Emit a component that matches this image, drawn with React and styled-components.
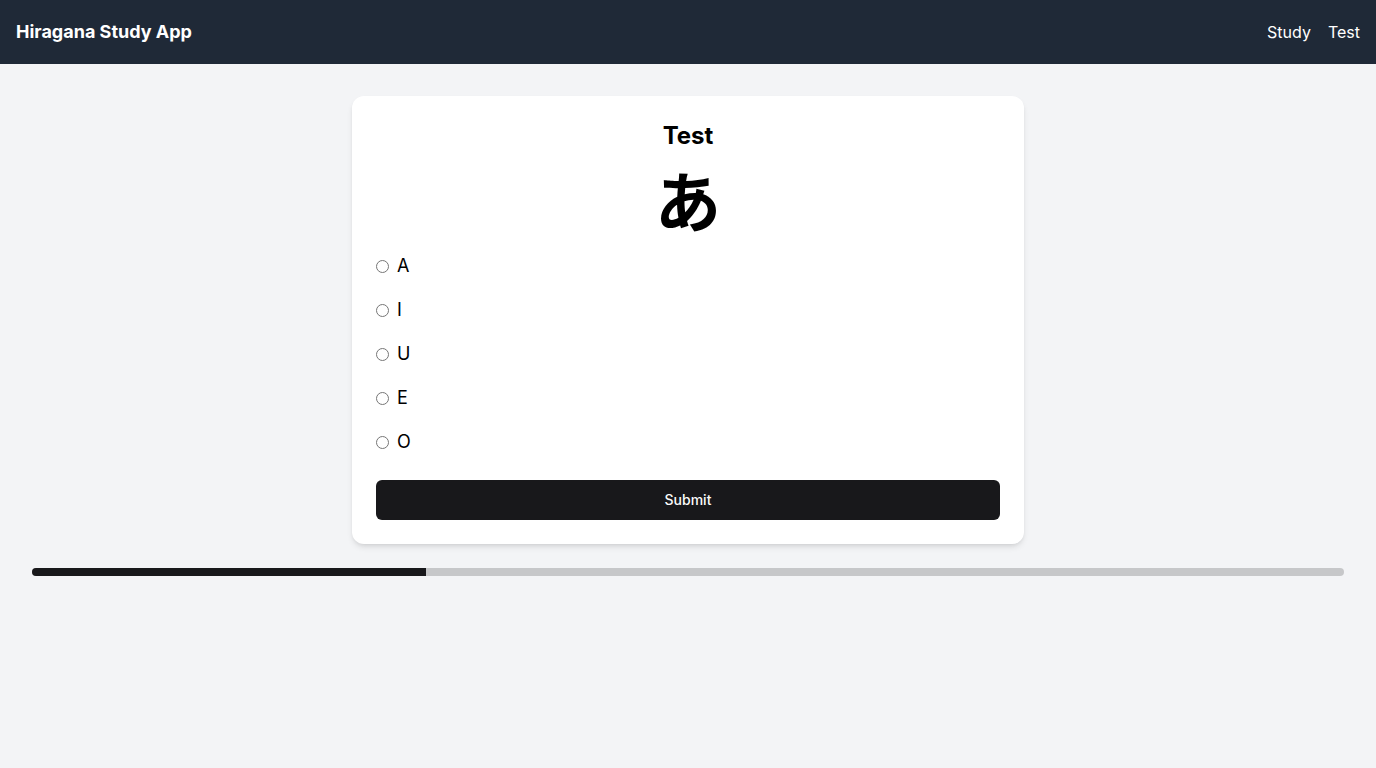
import React, { useState } from "react";
import styled, { createGlobalStyle } from "styled-components";

const Global = createGlobalStyle`
  * { box-sizing: border-box; }
  html, body { margin: 0; padding: 0; }
  body {
    background: #f3f4f6;
    font-family: Inter, "Noto Sans", "Noto Sans CJK JP", sans-serif;
    color: #000;
  }
`;

const Page = styled.div`
  min-height: 768px;
  background: #f3f4f6;
`;

const Header = styled.header`
  height: 64px;
  background: #1f2937;
  color: #fff;
  display: flex;
  align-items: center;
  justify-content: space-between;
  padding: 0 16px;
`;

const Brand = styled.h1`
  margin: 0;
  font-size: 18px;
  font-weight: 700;
  line-height: 28px;
`;

const Nav = styled.nav`
  display: flex;
  gap: 17px;
`;

const NavLink = styled.a`
  color: #fff;
  text-decoration: none;
  font-size: 16px;
  line-height: 24px;
`;

const Main = styled.main`
  padding: 32px;
  display: flex;
  flex-direction: column;
  align-items: center;
  gap: 24px;
`;

const Card = styled.section`
  width: 672px;
  background: #fff;
  border-radius: 12px;
  box-shadow: 0 4px 6px -1px rgba(0,0,0,0.1), 0 2px 4px -2px rgba(0,0,0,0.1);
  padding: 24px;
  display: flex;
  flex-direction: column;
`;

const Title = styled.h2`
  margin: 0 0 16px;
  text-align: center;
  font-size: 24px;
  line-height: 32px;
  font-weight: 700;
`;

const Kana = styled.div`
  height: 60px;
  display: flex;
  align-items: center;
  justify-content: center;
  font-family: "Noto Sans CJK JP", sans-serif;
  font-size: 66px;
  line-height: 60px;
  font-weight: 700;
  margin-bottom: 16px;
`;

const Options = styled.div`
  display: flex;
  flex-direction: column;
`;

const Option = styled.label`
  display: flex;
  align-items: center;
  gap: 8px;
  padding: 8px 0;
  font-size: 18px;
  line-height: 28px;
  cursor: pointer;
`;

const Radio = styled.input`
  margin: 0;
  width: 13px;
  height: 13px;
`;

const Submit = styled.button`
  margin-top: 16px;
  height: 40px;
  border: none;
  border-radius: 6px;
  background: #18181b;
  color: #fafafa;
  font-family: inherit;
  font-size: 14px;
  font-weight: 500;
  line-height: 20px;
  padding: 0 0 1px;
  cursor: pointer;
`;

const Track = styled.div`
  align-self: stretch;
  height: 8px;
  border-radius: 4px;
  background: #c6c7c9;
  overflow: hidden;
`;

const Fill = styled.div`
  height: 100%;
  background: #18181b;
`;

export default function App() {
  const [choice, setChoice] = useState(null);
  const options = ["A", "I", "U", "E", "O"];
  return (
    <Page>
      <Global />
      <Header>
        <Brand>Hiragana Study App</Brand>
        <Nav>
          <NavLink href="#">Study</NavLink>
          <NavLink href="#">Test</NavLink>
        </Nav>
      </Header>
      <Main>
        <Card>
          <Title>Test</Title>
          <Kana>あ</Kana>
          <Options>
            {options.map((o) => (
              <Option key={o}>
                <Radio
                  type="radio"
                  name="answer"
                  checked={choice === o}
                  onChange={() => setChoice(o)}
                />
                {o}
              </Option>
            ))}
          </Options>
          <Submit>Submit</Submit>
        </Card>
        <Track>
          <Fill style={{ width: "30%" }} />
        </Track>
      </Main>
    </Page>
  );
}
